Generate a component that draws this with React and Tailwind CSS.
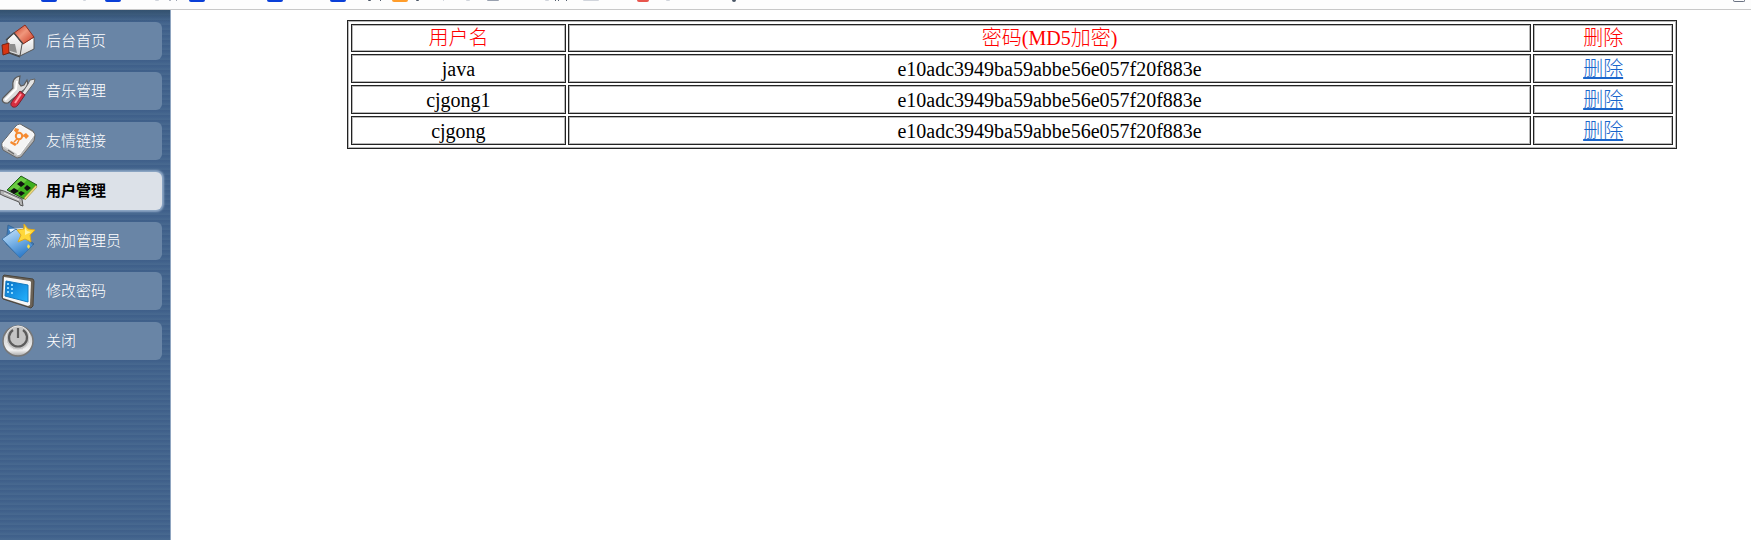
const tabs = [
  { x: "left-[41px]", w: "w-4", h: "h-[2px]", c: "bg-[#0a3fd8]" },
  { x: "left-[105px]", w: "w-4", h: "h-[2px]", c: "bg-[#0a3fd8]" },
  { x: "left-[189px]", w: "w-4", h: "h-[2px]", c: "bg-[#0a3fd8]" },
  { x: "left-[267px]", w: "w-4", h: "h-[2px]", c: "bg-[#0a3fd8]" },
  { x: "left-[330px]", w: "w-4", h: "h-[2px]", c: "bg-[#0a3fd8]" },
  { x: "left-[392px]", w: "w-4", h: "h-[2px]", c: "bg-[#ff9d2b]" },
  { x: "left-[637px]", w: "w-3", h: "h-[2px]", c: "bg-[#e8554d]" },
  { x: "left-[83px]", w: "w-[3px]", h: "h-px", c: "bg-gray-300" },
  { x: "left-[155px]", w: "w-1", h: "h-px", c: "bg-gray-300" },
  { x: "left-[169px]", w: "w-[2px]", h: "h-px", c: "bg-gray-400" },
  { x: "left-[176px]", w: "w-px", h: "h-px", c: "bg-gray-400" },
  { x: "left-[368px]", w: "w-[3px]", h: "h-px", c: "bg-gray-600" },
  { x: "left-[380px]", w: "w-px", h: "h-px", c: "bg-gray-600" },
  { x: "left-[416px]", w: "w-[3px]", h: "h-px", c: "bg-gray-600" },
  { x: "left-[443px]", w: "w-px", h: "h-px", c: "bg-gray-300" },
  { x: "left-[466px]", w: "w-1", h: "h-px", c: "bg-gray-300" },
  { x: "left-[487px]", w: "w-3", h: "h-px", c: "bg-gray-400" },
  { x: "left-[545px]", w: "w-1", h: "h-px", c: "bg-gray-300" },
  { x: "left-[555px]", w: "w-px", h: "h-px", c: "bg-gray-600" },
  { x: "left-[558px]", w: "w-px", h: "h-px", c: "bg-gray-600" },
  { x: "left-[566px]", w: "w-px", h: "h-px", c: "bg-gray-600" },
  { x: "left-[583px]", w: "w-4", h: "h-px", c: "bg-gray-300" },
  { x: "left-[666px]", w: "w-1", h: "h-px", c: "bg-gray-300" },
  { x: "left-[732px]", w: "w-1", h: "h-[2px]", c: "bg-gray-600" },
];

const HomeIcon = () => (
  <svg viewBox="0 0 36 36" className="size-9" aria-hidden="true">
    <defs>
      <linearGradient id="roof" x1="0" y1="0" x2="1" y2="1">
        <stop offset="0" stopColor="#c4331f" />
        <stop offset=".45" stopColor="#f0977c" />
        <stop offset="1" stopColor="#c9351f" />
      </linearGradient>
      <linearGradient id="wall" x1="0" y1="0" x2="0" y2="1">
        <stop stopColor="#ffffff" />
        <stop offset="1" stopColor="#d2d2d2" />
      </linearGradient>
    </defs>
    <path d="m7 17 7-7 9 11-3 12-12-4Z" fill="url(#wall)" stroke="#555" />
    <path d="m22 21 12-7v12l-14 7Z" fill="url(#wall)" stroke="#555" />
    <path d="M10 21h5l2 9-7-2Z" fill="#8d8d8d" />
    <path d="M14 10 25 2l9 12-11 7Z" fill="url(#roof)" stroke="#8e2c1c" />
    <path d="m6 17 8-7 9 11" fill="none" stroke="#4a4a4a" strokeWidth="1.4" />
    <path d="m2 22 7-2v10l-6 2Z" fill="#d83512" stroke="#762312" />
    <path d="m9 30 11 4" stroke="#444" strokeWidth="1.2" />
  </svg>
);

const ToolsIcon = () => (
  <svg viewBox="0 0 36 36" className="size-9" aria-hidden="true">
    <path
      d="m3 25 10-10c-1-6 1-11 7-12l-1 7 2 3 3-1 3-5c2 4 0 9-6 12L8 30c-4 1-7-2-5-5Z"
      fill="#dcdcdc" stroke="#5a5a5a" strokeWidth="1.2"
    />
    <path d="m5 27 11-11 1-8" fill="none" stroke="#fff" strokeWidth="2" />
    <path d="m22 20 6-9 2-4 5-1-1 4-3 4-6 8Z" fill="#e3e3e3" stroke="#666" />
    <path d="m13 27 7-9 5 4-7 10c-3 4-8 2-7-2Z" fill="#d62d3f" stroke="#7b2430" />
    <path d="m15 30 6-9" stroke="#ff9aa2" strokeWidth="2" />
  </svg>
);

const LinkIcon = () => (
  <svg viewBox="0 0 36 36" className="size-9" aria-hidden="true">
    <path d="M2 20 16 3l4-2 13 7 2 4-1 6-13 16-4 1L3 27l-1-3Z" fill="#b5b5b5" stroke="#666" />
    <path d="M3 20 17 3l3-1 13 8 1 2-14 19-3 1L3 23Z" fill="#f4f4f4" stroke="#fff" />
    <path d="m4 25 13 8v-2L4 23Z" fill="#cfcfcf" />
    <path d="m8 27 6 4" stroke="#666" strokeWidth="1.2" />
    <circle cx="19" cy="13" r="3.2" fill="none" stroke="#f58b32" strokeWidth="2" />
    <path d="m17 10-2-3M22 13h3M17 16l-3 3M19 17l-2 4" stroke="#f58b32" strokeWidth="1.6" />
    <path d="m23 12 3-2 3 3-3 3ZM15 5l4 1-1 3-4-1ZM11 18l6 3-2 2-5-3Z" fill="#f58b32" />
  </svg>
);

const CardIcon = () => (
  <svg viewBox="0 0 38 36" className="h-9 w-[38px]" aria-hidden="true">
    <path d="M7 17 21 3l16 9-13 14Z" fill="#3fb01e" stroke="#285d1c" />
    <path d="m9 16 12-12 6 3-12 12Z" fill="#6bcb42" />
    <path d="M24 25 36 12l1 2-12 13Z" fill="#eedc78" stroke="#83722b" strokeWidth=".5" />
    <path d="m17 11 4-3 4 3-4 3ZM24 15l3-3 4 3-4 3ZM10 18l4-3 5 3-5 3ZM18 20l3-2 4 2-4 3Z" fill="#111" />
    <path d="m0 17 4 1 18 8 1 7-3-1-1-3L4 23l-4-2Z" fill="#b5b5b5" stroke="#555" />
    <path d="m4 20 15 7" stroke="#eee" />
  </svg>
);

const FolderIcon = () => (
  <svg viewBox="0 0 36 36" className="size-9" aria-hidden="true">
    <defs>
      <linearGradient id="folder" x1="0" y1="0" x2=".5" y2="1">
        <stop stopColor="#cfe6fa" />
        <stop offset=".5" stopColor="#7db5e8" />
        <stop offset="1" stopColor="#2f7cca" />
      </linearGradient>
    </defs>
    <path d="m8 2 6 3 20 16-14 14L6 21Z" fill="#3d7fc0" stroke="#3a6796" />
    <path d="m9 6 14-1 8 14-12 9Z" fill="#e4f2fd" />
    <path d="m2 16 14-10 17 16-13 13Z" fill="url(#folder)" stroke="#4476a8" />
    <path d="m24 1 4 5 7 1-5 5 1 7-6-3-7 3 3-7-4-5 7-1Z" fill="#ffd83a" stroke="#e0a81c" />
    <path d="m25 4 2 4 4 1-6 3Z" fill="#fff2a0" />
    <path d="m28 21 2 2-1 3-2-2Z" fill="#ffe344" />
  </svg>
);

const ScreenIcon = () => (
  <svg viewBox="0 0 36 36" className="size-9" aria-hidden="true">
    <defs>
      <linearGradient id="screen" x1="0" y1="0" x2="1" y2="1">
        <stop stopColor="#0871c8" />
        <stop offset="1" stopColor="#25b4ff" />
      </linearGradient>
    </defs>
    <path d="m4 2 29 4 1 2-1 25-2 2L3 26l-1-2L3 3Z" fill="#6b6256" stroke="#4a443c" />
    <path d="m4 4 26 4 1 1-1 23-2 1L3 25Z" fill="#f7f7f7" />
    <path d="m6 8 22 4v17L5 23Z" fill="url(#screen)" stroke="#1479bd" />
    <path d="M7 11h2m2 1h2M7 15h2m2 1h2m-6 3h2m2 1h2" stroke="#8bd8ff" strokeWidth="2" />
  </svg>
);

const PowerIcon = () => (
  <svg viewBox="0 0 36 36" className="size-9" aria-hidden="true">
    <defs>
      <linearGradient id="power" x1="0" y1="0" x2="0" y2="1">
        <stop stopColor="#b4b4b4" />
        <stop offset=".8" stopColor="#f4f4f4" />
        <stop offset="1" stopColor="#a5a5a5" />
      </linearGradient>
    </defs>
    <circle cx="18" cy="18" r="15" fill="url(#power)" stroke="#777" strokeWidth="1.5" />
    <circle cx="18" cy="15" r="12" fill="#c4c4c4" stroke="#e6e6e6" />
    <path d="M13 7a9 9 0 1 0 10 0M18 5v10" fill="none" stroke="#5c5c5c" strokeWidth="2.2" />
  </svg>
);

const menu = [
  { label: "后台首页", Icon: HomeIcon },
  { label: "音乐管理", Icon: ToolsIcon },
  { label: "友情链接", Icon: LinkIcon },
  { label: "用户管理", Icon: CardIcon, active: true },
  { label: "添加管理员", Icon: FolderIcon },
  { label: "修改密码", Icon: ScreenIcon },
  { label: "关闭", Icon: PowerIcon },
];

const users = ["java", "cjgong1", "cjgong"];
const hash = "e10adc3949ba59abbe56e057f20f883e";

const App = () => {
  return (
    <div className="flex min-h-screen flex-col bg-white">
      {/* bookmarks bar */}
      <div className="relative h-[10px] overflow-hidden border-b border-[#c8c8c8] bg-[#fdfdfd]">
        {tabs.map((t) => (
          <span key={t.x} className={`absolute top-0 rounded-b-sm ${t.x} ${t.w} ${t.h} ${t.c}`} />
        ))}
        <span className="absolute top-0 right-[6px] h-[2px] w-3 rounded-b-sm border border-t-0 border-gray-500" />
      </div>

      <div className="flex flex-1">
        {/* sidebar */}
        <aside className="w-[171px] shrink-0 border-r border-[#8fa5c0] bg-[repeating-linear-gradient(to_bottom,#3f5f89_0px,#41628c_2px,#47688f_4px,#47688f_5px)]">
          <div className="h-3 bg-linear-to-b from-[#34526f] to-transparent" />
          <nav className="flex flex-col gap-3">
            {menu.map(({ label, Icon, active }) => (
              <a
                key={label}
                href="#"
                className={`mr-2 flex h-[38px] items-center rounded-r-md font-['Noto_Sans_CJK_SC',sans-serif] text-[15px] leading-5 ${
                  active
                    ? "bg-[#dce1e8] font-bold text-black shadow-[0_0_2px_2px_#8fa8c6]"
                    : "bg-[#6985a6] font-light text-white"
                }`}
              >
                <span className="w-[46px] shrink-0">
                  <Icon />
                </span>
                <span className="pb-0.5">{label}</span>
              </a>
            ))}
          </nav>
        </aside>

        {/* user list */}
        <main className="flex-1 pt-[10px] pr-[74px] pl-44">
          <table className="w-full table-fixed border-separate border-spacing-[2px] border border-[#222] p-px font-['Liberation_Serif','Noto_Sans_CJK_SC',serif] text-[20px] leading-6 font-light text-black shadow-[inset_0_0_0_1px_#b8b8b8]">
            <colgroup>
              <col className="w-[16.3%]" />
              <col />
              <col className="w-[10.6%]" />
            </colgroup>
            <thead>
              <tr className="text-[#f00]">
                {["用户名", "密码(MD5加密)", "删除"].map((title) => (
                  <th
                    key={title}
                    className="h-7 border border-[#222] p-0 text-center font-light shadow-[inset_0_0_0_1px_#b8b8b8]"
                  >
                    {title}
                  </th>
                ))}
              </tr>
            </thead>
            <tbody className="[&_td]:h-[29px] [&_td]:border [&_td]:border-[#222] [&_td]:p-0 [&_td]:text-center [&_td]:shadow-[inset_0_0_0_1px_#b8b8b8]">
              {users.map((name) => (
                <tr key={name}>
                  <td>{name}</td>
                  <td>{hash}</td>
                  <td>
                    <a href="#" className="text-[#1a66cc] underline">删除</a>
                  </td>
                </tr>
              ))}
            </tbody>
          </table>
        </main>
      </div>
    </div>
  );
};

export default App;
